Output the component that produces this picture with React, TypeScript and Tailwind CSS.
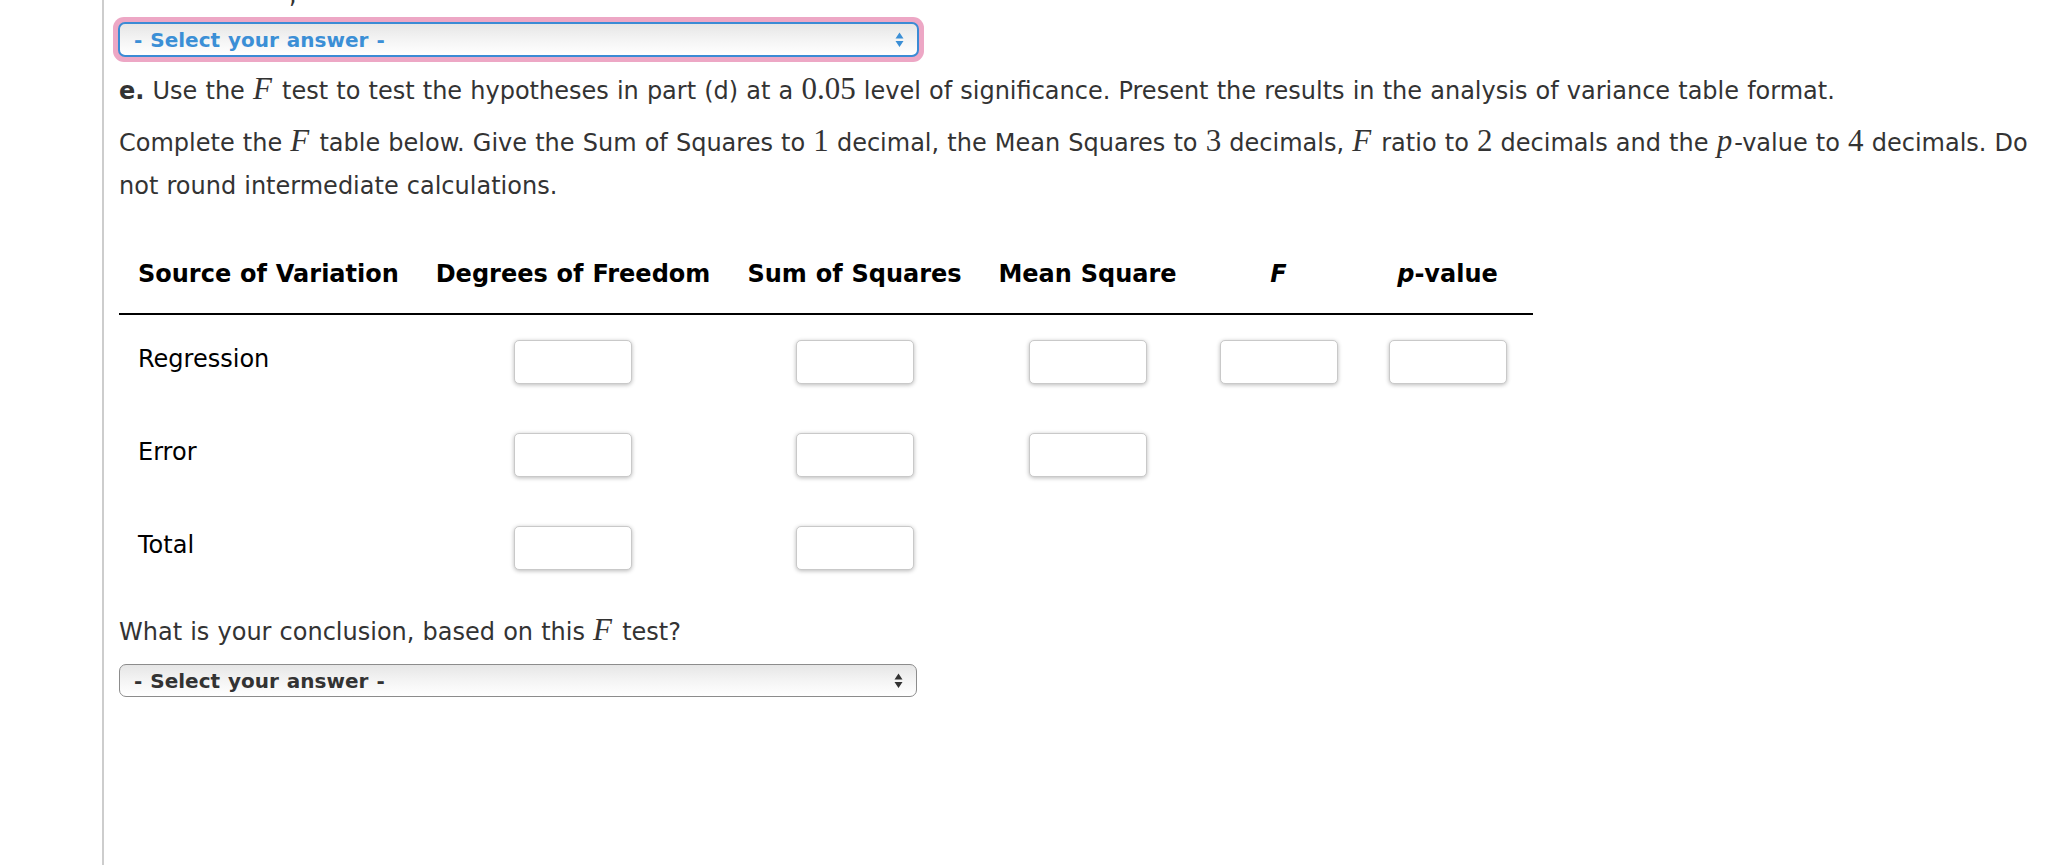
import React from 'react';

const sans = { fontFamily: '"DejaVu Sans", Verdana, sans-serif' };

function M({ children, italic = true }: { children: React.ReactNode; italic?: boolean }) {
    return (
        <span
            className={`text-[31px] leading-none [word-spacing:0] ${italic ? 'italic pr-[2px]' : ''}`}
            style={{ fontFamily: '"Liberation Serif", "DejaVu Serif", serif' }}
        >
            {children}
        </span>
    );
}

function UpDown({ color }: { color: string }) {
    return (
        <svg width="9" height="16" viewBox="0 0 9 16" className="shrink-0">
            <path d="M4.5 0.5 L8.5 6.5 H0.5 Z M0.5 9 H8.5 L4.5 15 Z" fill={color} />
        </svg>
    );
}

function AnswerSelect({ active = false }: { active?: boolean }) {
    return (
        <div
            className={`flex items-center justify-between rounded-[7px] pl-[14px] pr-[13px] bg-gradient-to-b from-[#e6e6e6] via-[#f4f4f4] to-white text-[20px] font-bold [word-spacing:1px] ${active
                ? 'h-[35px] border-2 border-[#3b8bd5] text-[#3b8fd6]'
                : 'h-[33px] border-[1.5px] border-[#8c8c8c] text-[#333]'
                }`}
        >
            <span>- Select your answer -</span>
            <UpDown color={active ? '#3b8fd6' : '#333'} />
        </div>
    );
}

function Box() {
    return <div className="w-[118px] h-[44px] bg-white border border-[#c9c9c9] rounded-[5px] shadow-[0_1px_4px_rgba(0,0,0,0.28)]" />;
}

const rows: { label: string; boxes: boolean[] }[] = [
    { label: 'Regression', boxes: [true, true, true, true, true] },
    { label: 'Error', boxes: [true, true, true, false, false] },
    { label: 'Total', boxes: [true, true, false, false, false] },
];

export default function App() {
    return (
        <div className="flex min-h-[865px] bg-white text-[24px] text-[#333] [word-spacing:0.5px]" style={sans}>
            <div className="w-[104px] shrink-0 border-r-2 border-[#cdcdcd]" />

            <div className="flex-1 pl-[15px] pr-[10px]">
                {/* tail of the line above */}
                <div className="h-[9px] overflow-hidden">
                    <div className="pl-[170px] -mt-[17px] leading-[24px]">,</div>
                </div>

                <div className="mt-[8px] -ml-[6px] w-[811px] p-[5px] rounded-[11px] bg-[#eda7c5]">
                    <AnswerSelect active />
                </div>

                <p className="mt-[8px] leading-[43px]">
                    <b>e.</b> Use the <M>F</M> test to test the hypotheses in part (d) at a <M italic={false}>0.05</M> level of
                    significance. Present the results in the analysis of variance table format.
                </p>

                <p className="mt-[9px] leading-[43px]">
                    Complete the <M>F</M> table below. Give the Sum of Squares to <M italic={false}>1</M> decimal, the Mean
                    Squares to <M italic={false}>3</M> decimals, <M>F</M> ratio to <M italic={false}>2</M> decimals and
                    the <M>p</M>-value to <M italic={false}>4</M> decimals. Do
                    <br />
                    not round intermediate calculations.
                </p>

                {/* ANOVA table */}
                <div className="mt-[22px] w-[1414px]">
                    <div className="grid grid-cols-[298px_312px_251px_215px_167px_171px] h-[85px] pt-[5px] items-center border-b-2 border-black font-bold text-black">
                        <div className="pl-[19px]">Source of Variation</div>
                        <div className="text-center">Degrees of Freedom</div>
                        <div className="text-center">Sum of Squares</div>
                        <div className="text-center">Mean Square</div>
                        <div className="text-center italic">F</div>
                        <div className="text-center"><span className="italic">p</span>-value</div>
                    </div>

                    {rows.map(row => (
                        <div key={row.label} className="grid grid-cols-[298px_312px_251px_215px_167px_171px] h-[93px] items-start pt-[25px] text-black">
                            <div className="pl-[19px] leading-[38px]">{row.label}</div>
                            {row.boxes.map((b, i) => (
                                <div key={i} className="flex justify-center">
                                    {b && <Box />}
                                </div>
                            ))}
                        </div>
                    ))}
                </div>

                <p className="mt-[17px] leading-[43px]">
                    What is your conclusion, based on this <M>F</M> test?
                </p>

                <div className="mt-[10px] w-[798px]">
                    <AnswerSelect />
                </div>
            </div>
        </div>
    );
}
